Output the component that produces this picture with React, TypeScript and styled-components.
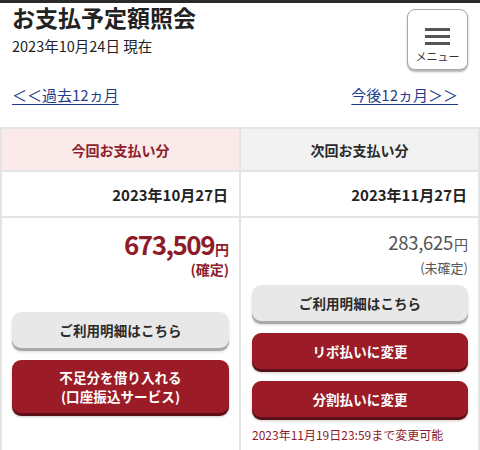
import React from "react";
import styled, { createGlobalStyle } from "styled-components";

const GlobalStyle = createGlobalStyle`
  html, body {
    margin: 0;
    padding: 0;
    background: #ffffff;
  }
  body {
    font-family: "Noto Sans CJK JP", "Noto Sans", sans-serif;
    color: #222;
    border-top: 3px solid #2a2a2a;
  }
`;

const StyledHeader = styled.div`
  display: flex;
  justify-content: space-between;
  align-items: flex-start;
  padding: 0 12px;
  height: 78px;
`;

const StyledTitle = styled.h1`
  margin: 0;
  font-size: 23px;
  font-weight: bold;
  line-height: 28px;
  color: #222;
`;

const StyledAsOf = styled.div`
  margin-top: 5px;
  font-size: 14.5px;
  line-height: 20px;
  color: #222;
`;

const StyledMenuButton = styled.button`
  margin-top: 6px;
  width: 61px;
  height: 61px;
  border: 1px solid #a8a8a8;
  border-radius: 8px;
  background: #fff;
  box-shadow: 0 2px 2px rgba(0, 0, 0, 0.3);
  display: flex;
  flex-direction: column;
  align-items: center;
  justify-content: flex-start;
  gap: 4px;
  padding: 18px 0 0 0;
  cursor: pointer;
`;

const StyledBurger = styled.span`
  display: flex;
  flex-direction: column;
  gap: 4px;
  width: 25px;
  & > i {
    display: block;
    height: 3px;
    background: #555;
  }
`;

const StyledMenuLabel = styled.span`
  font-family: "Noto Sans CJK JP", sans-serif;
  font-size: 11px;
  line-height: 14px;
  color: #333;
`;

const StyledNav = styled.div`
  display: flex;
  justify-content: space-between;
  padding: 4px 22px 0 12px;
  height: 42px;
`;

const StyledNavLink = styled.a`
  font-size: 15px;
  line-height: 20px;
  color: #1f3c8c;
  text-decoration: underline;
  text-underline-offset: 3px;
  cursor: pointer;
`;

const StyledTable = styled.div`
  display: grid;
  grid-template-columns: 1fr 1fr;
  border-top: 2px solid #e4e4e4;
  border-left: 2px solid #e4e4e4;
`;

const StyledHeadCell = styled.div<{ $current?: boolean }>`
  height: 41px;
  display: flex;
  align-items: center;
  justify-content: center;
  font-size: 14px;
  font-weight: bold;
  background: ${(p) => (p.$current ? "#fbeaea" : "#f2f2f2")};
  color: ${(p) => (p.$current ? "#8c1f2b" : "#2a2a2a")};
  border-right: 2px solid #e4e4e4;
  border-bottom: 2px solid #e4e4e4;
`;

const StyledDateCell = styled.div`
  height: 44px;
  display: flex;
  align-items: center;
  justify-content: flex-end;
  padding-right: 11px;
  font-size: 15px;
  font-weight: bold;
  color: #222;
  border-right: 2px solid #e4e4e4;
  border-bottom: 2px solid #e4e4e4;
`;

const StyledBodyCell = styled.div<{ $side: "left" | "right" }>`
  padding: 12px 10px 20px ${(p) => (p.$side === "left" ? "10px" : "11px")};
  border-right: 2px solid #e4e4e4;
  display: flex;
  flex-direction: column;
`;

const StyledAmount = styled.div<{ $fixed?: boolean }>`
  display: flex;
  justify-content: flex-end;
  align-items: baseline;
  height: ${(p) => (p.$fixed ? "29px" : "26px")};
  font-size: ${(p) => (p.$fixed ? "26px" : "18.5px")};
  line-height: 1;
  font-weight: ${(p) => (p.$fixed ? "bold" : "normal")};
  color: ${(p) => (p.$fixed ? "#8e1b28" : "#555")};
  letter-spacing: ${(p) => (p.$fixed ? "-1.5px" : "-0.3px")};
  padding-top: ${(p) => (p.$fixed ? "1px" : "3px")};
  & > small {
    font-size: 14px;
    font-weight: ${(p) => (p.$fixed ? "bold" : "normal")};
    letter-spacing: 0;
    margin-left: 1px;
  }
`;

const StyledStatus = styled.div<{ $fixed?: boolean }>`
  text-align: right;
  font-size: ${(p) => (p.$fixed ? "14px" : "13px")};
  line-height: 18px;
  font-weight: ${(p) => (p.$fixed ? "bold" : "normal")};
  color: ${(p) => (p.$fixed ? "#8e1b28" : "#555")};
`;

const StyledButtonStack = styled.div<{ $offset: number }>`
  margin-top: ${(p) => p.$offset}px;
  display: flex;
  flex-direction: column;
  gap: 12px;
`;

const StyledButton = styled.button<{ $variant: "gray" | "red"; $tall?: boolean }>`
  width: 100%;
  height: ${(p) => (p.$tall ? "53px" : "36px")};
  border: none;
  border-radius: 9px;
  padding: 0;
  font-family: inherit;
  font-size: 13.5px;
  font-weight: bold;
  line-height: 19px;
  letter-spacing: 0.1px;
  cursor: pointer;
  background: ${(p) => (p.$variant === "red" ? "#9b1c27" : "#e8e8e8")};
  color: ${(p) => (p.$variant === "red" ? "#ffffff" : "#2a2a2a")};
  box-shadow: ${(p) =>
    p.$variant === "red"
      ? "0 3px 0 #5e1018, 0 4px 3px rgba(0,0,0,0.2)"
      : "0 3px 0 #a9a9a9, 0 4px 3px rgba(0,0,0,0.15)"};
`;

const StyledNote = styled.div`
  margin-top: 10px;
  font-size: 12px;
  line-height: 16px;
  color: #8e1b28;
`;

export default function App() {
  return (
    <>
      <GlobalStyle />
      <StyledHeader>
        <div>
          <StyledTitle>お支払予定額照会</StyledTitle>
          <StyledAsOf>2023年10月24日 現在</StyledAsOf>
        </div>
        <StyledMenuButton>
          <StyledBurger>
            <i />
            <i />
            <i />
          </StyledBurger>
          <StyledMenuLabel>メニュー</StyledMenuLabel>
        </StyledMenuButton>
      </StyledHeader>
      <StyledNav>
        <StyledNavLink>＜＜過去12ヵ月</StyledNavLink>
        <StyledNavLink>今後12ヵ月＞＞</StyledNavLink>
      </StyledNav>
      <StyledTable>
        <StyledHeadCell $current>今回お支払い分</StyledHeadCell>
        <StyledHeadCell>次回お支払い分</StyledHeadCell>
        <StyledDateCell>2023年10月27日</StyledDateCell>
        <StyledDateCell>2023年11月27日</StyledDateCell>
        <StyledBodyCell $side="left">
          <StyledAmount $fixed>
            673,509<small>円</small>
          </StyledAmount>
          <StyledStatus $fixed>(確定)</StyledStatus>
          <StyledButtonStack $offset={34}>
            <StyledButton $variant="gray">ご利用明細はこちら</StyledButton>
            <StyledButton $variant="red" $tall>
              不足分を借り入れる
              <br />
              (口座振込サービス)
            </StyledButton>
          </StyledButtonStack>
        </StyledBodyCell>
        <StyledBodyCell $side="right">
          <StyledAmount>
            283,625<small>円</small>
          </StyledAmount>
          <StyledStatus>(未確定)</StyledStatus>
          <StyledButtonStack $offset={8}>
            <StyledButton $variant="gray">ご利用明細はこちら</StyledButton>
            <StyledButton $variant="red">リボ払いに変更</StyledButton>
            <StyledButton $variant="red">分割払いに変更</StyledButton>
          </StyledButtonStack>
          <StyledNote>2023年11月19日23:59まで変更可能</StyledNote>
        </StyledBodyCell>
      </StyledTable>
    </>
  );
}
